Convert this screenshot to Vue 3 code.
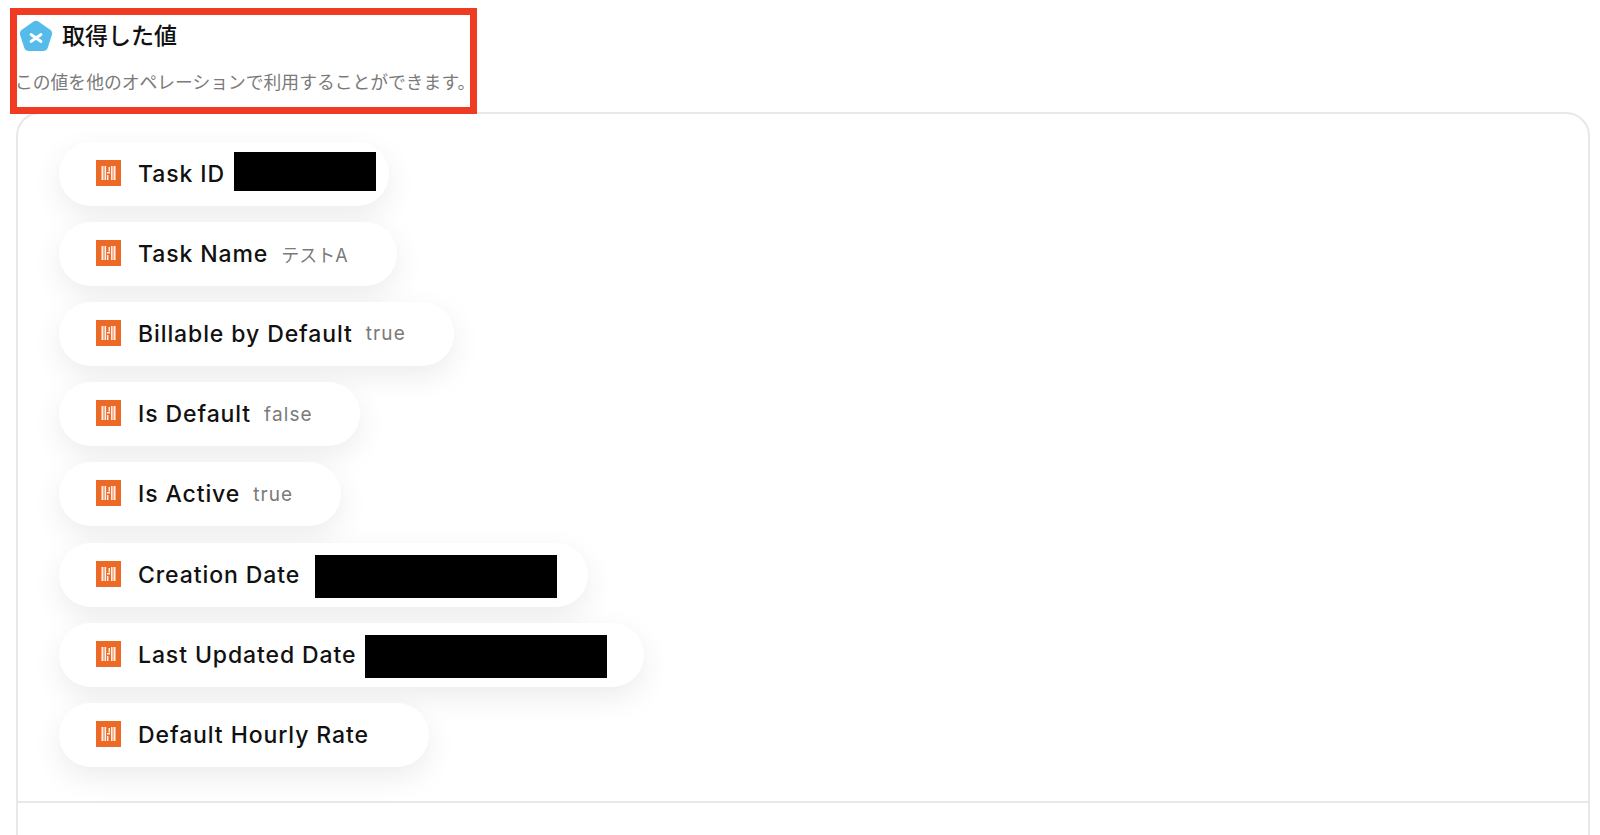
<template>
  <div class="page">
    <div class="highlight"></div>
    <header class="head">
      <div class="title-row">
        <svg class="logo" width="34" height="32" viewBox="0 0 34 32">
          <path d="M14.6 1.5 Q17 -0.2 19.4 1.5 L31.5 10 Q33.8 11.7 33 14.4 L28.6 28.3 Q27.8 31 25 31 L9 31 Q6.2 31 5.4 28.3 L1 14.4 Q0.2 11.7 2.5 10 Z" fill="#55bbea" />
          <path d="M12 14.5 L22 21.5 M22 14.5 L12 21.5" stroke="#fff" stroke-width="2.8" stroke-linecap="round" />
        </svg>
        <h1 class="title">取得した値</h1>
      </div>
      <p class="desc">この値を他のオペレーションで利用することができます。</p>
    </header>
    <section class="card">
      <ul class="list">
        <li v-for="item in items" :key="item.name" class="pill" :style="{ width: item.width + 'px' }">
          <svg class="app-icon" width="25" height="26" viewBox="0 0 25 26">
            <rect width="25" height="26" fill="#ec6a26" />
            <path d="M5.5 6h2v14h-2zM8.5 6h1.6v14H8.5zM11 12h3v1.6h-3zM11 15h1.4v5H11zM12.6 7h1.4v4.5h-1.4zM15 6h1.6v14H15zM17.5 6h2v14h-2z" fill="#fff" opacity="0.92" />
          </svg>
          <span class="name">{{ item.name }}</span>
          <span v-if="item.value" class="value" :class="{ tight: item.tight }">{{ item.value }}</span>
          <span v-if="item.mask" class="mask" :class="item.maskClass" :style="{ width: item.mask + 'px', height: item.maskH + 'px', marginLeft: item.maskGap + 'px' }"></span>
        </li>
      </ul>
      <div class="divider"></div>
    </section>
  </div>
</template>

<script setup>
const items = [
  { name: "Task ID", width: 330, mask: 142, maskH: 39, maskGap: 9, maskClass: "up" },
  { name: "Task Name", value: "テストA", tight: true, width: 338 },
  { name: "Billable by Default", value: "true", width: 395 },
  { name: "Is Default", value: "false", width: 301 },
  { name: "Is Active", value: "true", width: 282 },
  { name: "Creation Date", width: 529, mask: 242, maskH: 43, maskGap: 15, maskClass: "down" },
  { name: "Last Updated Date", width: 585, mask: 242, maskH: 43, maskGap: 9, maskClass: "down" },
  { name: "Default Hourly Rate", width: 370 },
];
</script>

<style>
html,
body {
  background: #fff;
  overflow: hidden;
}
</style>

<style scoped>
.page {
  position: relative;
  width: 1600px;
  height: 835px;
  overflow: hidden;
  font-family: Inter, "Noto Sans CJK JP", sans-serif;
  color: #111;
}

.highlight {
  position: absolute;
  left: 10px;
  top: 8px;
  width: 467px;
  height: 106px;
  box-sizing: border-box;
  border: 7px solid #ee3b22;
  z-index: 2;
}

.head {
  height: 112px;
  box-sizing: border-box;
  padding: 20px 0 0 15px;
}

.title-row {
  display: flex;
  align-items: center;
  gap: 9px;
  padding-left: 4px;
}

.title {
  margin: 0;
  font-size: 23px;
  line-height: 32px;
  font-weight: 500;
}

.desc {
  margin: 19px 0 0;
  font-size: 17.8px;
  line-height: 24px;
  color: #7a7a7a;
  white-space: nowrap;
}

.card {
  height: 760px;
  margin-left: 16px;
  width: 1574px;
  box-sizing: border-box;
  border: 2px solid #e8e8e8;
  border-radius: 24px;
}

.list {
  list-style: none;
  margin: 0;
  padding: 27.6px 0 0 41px;
  height: 687px;
  box-sizing: border-box;
  display: flex;
  flex-direction: column;
  align-items: flex-start;
  gap: 16.2px;
}

.pill {
  display: flex;
  align-items: center;
  height: 64px;
  box-sizing: border-box;
  padding-left: 37px;
  background: #fff;
  border-radius: 32px;
  box-shadow: 0 10px 30px rgba(0, 0, 0, 0.08);
}

.app-icon {
  flex: none;
  margin-right: 17px;
  margin-bottom: 2px;
}

.name {
  font-size: 23px;
  font-weight: 500;
  letter-spacing: 0.9px;
  white-space: nowrap;
}

.value {
  margin-left: 13px;
  font-size: 19px;
  letter-spacing: 1.1px;
  color: #7a7a7a;
  white-space: nowrap;
}

.value.tight {
  font-size: 18px;
  letter-spacing: 0;
}

.mask {
  flex: none;
  background: #000;
}

.mask.up {
  margin-bottom: 4px;
}

.mask.down {
  margin-top: 3px;
}

.divider {
  height: 2px;
  background: #e8e8e8;
}
</style>
